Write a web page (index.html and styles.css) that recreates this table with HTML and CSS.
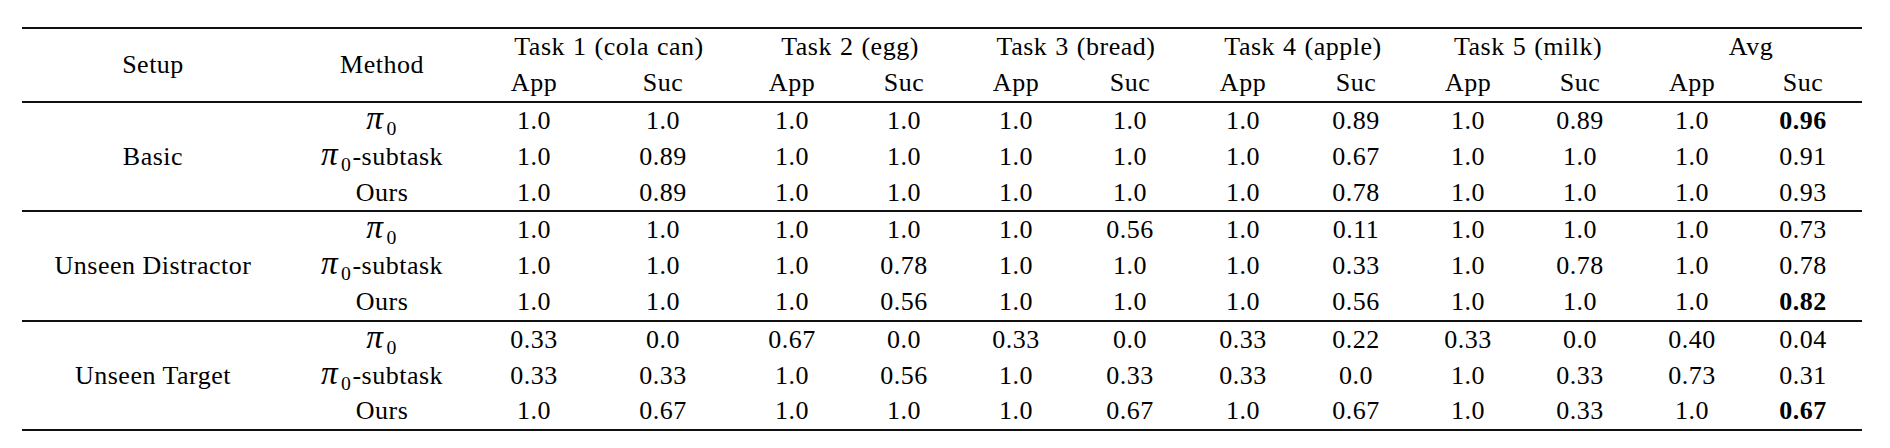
FILE: index.html
```html
<!DOCTYPE html>
<html>
<head>
<meta charset="utf-8">
<link rel="stylesheet" href="styles.css">
</head>
<body>
<table class="results">
  <colgroup>
    <col class="c-setup"><col class="c-method">
    <col class="c-a1"><col class="c-s1">
    <col class="c-a2"><col class="c-s2">
    <col class="c-a3"><col class="c-s3">
    <col class="c-a4"><col class="c-s4">
    <col class="c-a5"><col class="c-s5">
    <col class="c-a6"><col class="c-s6">
  </colgroup>
  <thead>
    <tr class="h1">
      <th rowspan="2">Setup</th>
      <th rowspan="2">Method</th>
      <th colspan="2">Task 1 (cola can)</th>
      <th colspan="2">Task 2 (egg)</th>
      <th colspan="2">Task 3 (bread)</th>
      <th colspan="2">Task 4 (apple)</th>
      <th colspan="2">Task 5 (milk)</th>
      <th colspan="2">Avg</th>
    </tr>
    <tr class="h2">
      <th>App</th><th>Suc</th><th>App</th><th>Suc</th><th>App</th><th>Suc</th>
      <th>App</th><th>Suc</th><th>App</th><th>Suc</th><th>App</th><th>Suc</th>
    </tr>
  </thead>
  <tbody>
    <tr>
      <td rowspan="3">Basic</td>
      <td><span class="pi">π</span><sub class="sub0">0</sub></td>
      <td>1.0</td><td>1.0</td><td>1.0</td><td>1.0</td><td>1.0</td><td>1.0</td><td>1.0</td><td>0.89</td><td>1.0</td><td>0.89</td><td>1.0</td><td class="best">0.96</td>
    </tr>
    <tr>
      <td><span class="pi">π</span><sub class="sub0">0</sub>-subtask</td>
      <td>1.0</td><td>0.89</td><td>1.0</td><td>1.0</td><td>1.0</td><td>1.0</td><td>1.0</td><td>0.67</td><td>1.0</td><td>1.0</td><td>1.0</td><td>0.91</td>
    </tr>
    <tr>
      <td>Ours</td>
      <td>1.0</td><td>0.89</td><td>1.0</td><td>1.0</td><td>1.0</td><td>1.0</td><td>1.0</td><td>0.78</td><td>1.0</td><td>1.0</td><td>1.0</td><td>0.93</td>
    </tr>
  </tbody>
  <tbody>
    <tr>
      <td rowspan="3">Unseen Distractor</td>
      <td><span class="pi">π</span><sub class="sub0">0</sub></td>
      <td>1.0</td><td>1.0</td><td>1.0</td><td>1.0</td><td>1.0</td><td>0.56</td><td>1.0</td><td>0.11</td><td>1.0</td><td>1.0</td><td>1.0</td><td>0.73</td>
    </tr>
    <tr>
      <td><span class="pi">π</span><sub class="sub0">0</sub>-subtask</td>
      <td>1.0</td><td>1.0</td><td>1.0</td><td>0.78</td><td>1.0</td><td>1.0</td><td>1.0</td><td>0.33</td><td>1.0</td><td>0.78</td><td>1.0</td><td>0.78</td>
    </tr>
    <tr>
      <td>Ours</td>
      <td>1.0</td><td>1.0</td><td>1.0</td><td>0.56</td><td>1.0</td><td>1.0</td><td>1.0</td><td>0.56</td><td>1.0</td><td>1.0</td><td>1.0</td><td class="best">0.82</td>
    </tr>
  </tbody>
  <tbody>
    <tr>
      <td rowspan="3">Unseen Target</td>
      <td><span class="pi">π</span><sub class="sub0">0</sub></td>
      <td>0.33</td><td>0.0</td><td>0.67</td><td>0.0</td><td>0.33</td><td>0.0</td><td>0.33</td><td>0.22</td><td>0.33</td><td>0.0</td><td>0.40</td><td>0.04</td>
    </tr>
    <tr>
      <td><span class="pi">π</span><sub class="sub0">0</sub>-subtask</td>
      <td>0.33</td><td>0.33</td><td>1.0</td><td>0.56</td><td>1.0</td><td>0.33</td><td>0.33</td><td>0.0</td><td>1.0</td><td>0.33</td><td>0.73</td><td>0.31</td>
    </tr>
    <tr>
      <td>Ours</td>
      <td>1.0</td><td>0.67</td><td>1.0</td><td>1.0</td><td>1.0</td><td>0.67</td><td>1.0</td><td>0.67</td><td>1.0</td><td>0.33</td><td>1.0</td><td class="best">0.67</td>
    </tr>
  </tbody>
</table>
</body>
</html>
```
FILE: styles.css
```css
html, body {
  margin: 0;
  padding: 0;
  background: #ffffff;
}

body {
  padding: 27px 0 0 22px;
}

.results {
  border-collapse: collapse;
  table-layout: fixed;
  width: 1840px;
  font-family: "Liberation Serif", "Times New Roman", serif;
  font-size: 26px;
  letter-spacing: 0.5px;
  color: #000;
  border-top: 2px solid #111;
  border-bottom: 2px solid #111;
}

.c-setup { width: 262px; }
.c-method { width: 196px; }
.c-a1 { width: 108px; }
.c-s1 { width: 150px; }
.c-a2 { width: 108px; }
.c-s2 { width: 116px; }
.c-a3 { width: 108px; }
.c-s3 { width: 120px; }
.c-a4 { width: 106px; }
.c-s4 { width: 120px; }
.c-a5 { width: 104px; }
.c-s5 { width: 120px; }
.c-a6 { width: 104px; }
.c-s6 { width: 118px; }

.results th,
.results td {
  padding: 0;
  text-align: center;
  vertical-align: middle;
  font-weight: normal;
  white-space: nowrap;
  line-height: 36px;
  height: 36px;
}

.results thead th {
  word-spacing: 1px;
}

.results tbody {
  border-top: 2px solid #111;
}

.results tbody td {
  height: 35.8px;
  line-height: 35.8px;
}

.best {
  font-weight: bold !important;
}

.pi {
  font-family: "Liberation Serif", "Times New Roman", serif;
  font-style: italic;
  font-size: 1.28em;
  line-height: 0;
  margin-right: 2px;
}

.sub0 {
  font-size: 0.76em;
  vertical-align: baseline;
  position: relative;
  top: 0.3em;
  line-height: 0;
  margin-left: 1px;
  margin-right: 1px;
}
```
